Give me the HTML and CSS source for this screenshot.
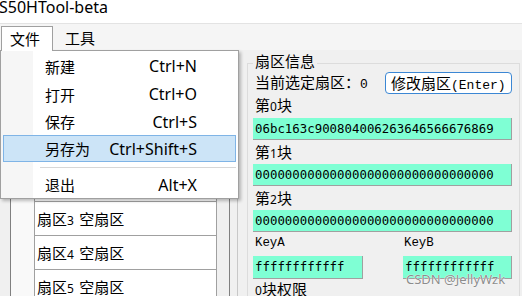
FILE: index.html
```html
<!DOCTYPE html>
<html>
<head>
<meta charset="utf-8">
<link rel="stylesheet" href="styles.css">
</head>
<body>
<div class="app">
  <div class="titlebar"><span class="title">S50HTool-beta</span></div>
  <div class="menubar">
    <div class="menu-item open">文件</div>
    <div class="menu-item">工具</div>
  </div>
  <div class="main">
    <div class="left">
      <div class="list">
        <div class="rowhead"></div>
        <div class="rows">
          <div class="head"></div>
          <div class="row">扇区<span class="num">0</span> 空扇区</div>
          <div class="row">扇区<span class="num">1</span> 空扇区</div>
          <div class="row">扇区<span class="num">2</span> 空扇区</div>
          <div class="row">扇区<span class="num">3</span> 空扇区</div>
          <div class="row">扇区<span class="num">4</span> 空扇区</div>
          <div class="row">扇区<span class="num">5</span> 空扇区</div>
        </div>
        <div class="list-gap"></div>
      </div>
      <div class="splitter"></div>
    </div>
    <div class="right">
      <div class="group">
        <span class="legend">扇区信息</span>
        <div class="row1">
          <span class="label">当前选定扇区：<span class="mono">0</span></span>
          <div class="btn">修改扇区<span class="mono">(Enter)</span></div>
        </div>
        <div class="label blk">第<span class="num">0</span>块</div>
        <div class="field f0">06bc163c900804006263646566676869</div>
        <div class="label blk b1">第<span class="num">1</span>块</div>
        <div class="field">00000000000000000000000000000000</div>
        <div class="label blk b1">第<span class="num">2</span>块</div>
        <div class="field">00000000000000000000000000000000</div>
        <div class="keys">
          <div class="keycol">
            <div class="klabel">KeyA</div>
            <div class="field kfield ka">ffffffffffff</div>
          </div>
          <div class="keycol">
            <div class="klabel kb">KeyB</div>
            <div class="field kfield">ffffffffffff</div>
          </div>
        </div>
        <div class="label perm"><span class="num">0</span>块权限</div>
      </div>
    </div>
  </div>

  <div class="dropdown">
    <div class="mi"><span>新建</span><span class="sc">Ctrl+N</span></div>
    <div class="mi"><span>打开</span><span class="sc">Ctrl+O</span></div>
    <div class="mi h27"><span>保存</span><span class="sc">Ctrl+S</span></div>
    <div class="mi h27 hot"><span>另存为</span><span class="sc">Ctrl+Shift+S</span></div>
    <div class="sep"></div>
    <div class="mi h25"><span>退出</span><span class="sc">Alt+X</span></div>
  </div>

  <div class="watermark">CSDN @JellyWzk</div>
</div>
</body>
</html>
```

FILE: styles.css
```css
* { box-sizing: border-box; }
html, body { margin: 0; padding: 0; }
body {
  width: 522px;
  height: 296px;
  overflow: hidden;
  background: #f0f0f0;
  font-family: "Noto Sans", "Noto Sans CJK SC", sans-serif;
  font-size: 15px;
  color: #000;
}
.app { position: relative; width: 522px; height: 296px; overflow: hidden; }

.titlebar { height: 24px; background: #fff; border-bottom: 1px solid #e3e3e3; }
.title { display: block; font-size: 16px; line-height: 14px; margin-left: -1px; }

.menubar { height: 26px; background: #f5f5f5; display: flex; padding-left: 1px; }
.menu-item {
  margin-top: 2px;
  padding: 1px 12px 0 12px;
  line-height: 22px;
  font-family: "Noto Sans CJK SC", sans-serif;
}
.menu-item.open {
  padding-left: 8px;
  background: #fff;
  border: 1px solid #a0a0a0;
  border-bottom: none;
  height: 25px;
  position: relative;
  z-index: 3;
}

.main { display: flex; height: 246px; }
.left { width: 247px; flex: none; display: flex; padding-left: 10px; }
.list {
  width: 220px;
  margin-top: 4px;
  border: 1px solid #808080;
  border-bottom: none;
  display: flex;
  background: #f0f0f0;
}
.rowhead { width: 24px; background: #f9f9f9; border-right: 1px solid #a0a0a0; }
.rows { width: 182px; background: #fff; border-right: 1px solid #a0a0a0; }
.head { height: 45px; border-bottom: 1px solid #a0a0a0; background: #f9f9f9; }
.row {
  height: 34px;
  border-bottom: 1px solid #a0a0a0;
  padding-left: 2px;
  line-height: 33px;
  font-family: "Noto Sans CJK SC", sans-serif;
  white-space: nowrap;
  word-spacing: 2px;
}
.num { font-family: "Noto Sans", sans-serif; font-size: 12px; }
.list-gap { flex: 1; }
.splitter { width: 1px; background: #c8c8c8; margin-left: 7px; }

.right { flex: none; width: 273px; padding-top: 13px; }
.group {
  position: relative;
  height: 240px;
  border: 1px solid #dcdcdc;
  padding: 8px 7px 0 5px;
  font-family: "Noto Sans CJK SC", sans-serif;
}
.legend {
  position: absolute;
  top: -13px;
  left: 5px;
  padding: 0 2px;
  background: #f0f0f0;
  line-height: 20px;
}
.row1 { display: flex; align-items: center; height: 22px; }
.label { padding-left: 2px; line-height: 22px; white-space: nowrap; }
.mono { font-family: "Liberation Mono", monospace; font-size: 13px; }
.btn {
  margin-left: auto;
  width: 127px;
  height: 22px;
  border: 1.5px solid #3b87d4;
  border-radius: 4px;
  background: #fff;
  padding-left: 5px;
  line-height: 19px;
  white-space: nowrap;
}
.blk { height: 22px; }
.b1 { margin-top: 1px; }
.field {
  height: 22px;
  background: #7fffd4;
  border-right: 1px solid #a0a0a0;
  border-bottom: 1px solid #a0a0a0;
  font-family: "DejaVu Sans Mono", monospace;
  font-size: 12.4px;
  line-height: 21px;
  padding-left: 2px;
  margin-top: 1px;
  white-space: nowrap;
}
.f0 { margin-top: 2px; }
.keys { display: grid; grid-template-columns: 150px 1fr; }
.klabel {
  font-family: "Liberation Mono", monospace;
  font-size: 12.4px;
  line-height: 22px;
  padding-left: 2px;
}
.kb { padding-left: 1px; }
.kfield { height: 23px; margin-top: 2px; line-height: 22px; }
.ka { width: 110px; }
.perm { line-height: 20px; }

.dropdown {
  position: absolute;
  left: 0;
  top: 50px;
  width: 239px;
  height: 149px;
  background: linear-gradient(to right, #f6f6f6 0 32px, #fff 32px);
  border: 1px solid #a0a0a0;
  box-shadow: 2px 2px 3px rgba(0, 0, 0, 0.25);
  padding: 1px;
  z-index: 2;
  display: flex;
  flex-direction: column;
  font-family: "Noto Sans CJK SC", sans-serif;
}
.mi {
  display: flex;
  align-items: center;
  height: 28px;
  margin: 0 1px;
  padding: 0 38px 0 41px;
  border: 1px solid transparent;
  white-space: nowrap;
}
.h27 { height: 27px; }
.h25 { height: 25px; }
.mi.hot { background: #cce4f7; border-color: #7fb4e6; }
.sc { margin-left: auto; font-family: "Noto Sans", sans-serif; font-size: 16px; }
.sep { height: 1px; background: #d7d7d7; margin: 5px 1px 4px 38px; }

.watermark {
  position: absolute;
  left: 406px;
  top: 270px;
  font-family: "Noto Sans", sans-serif;
  font-size: 13px;
  color: #8c8c8c;
  text-shadow: 0 0 1px #fff, 0 0 1px #fff;
  z-index: 4;
}
```
